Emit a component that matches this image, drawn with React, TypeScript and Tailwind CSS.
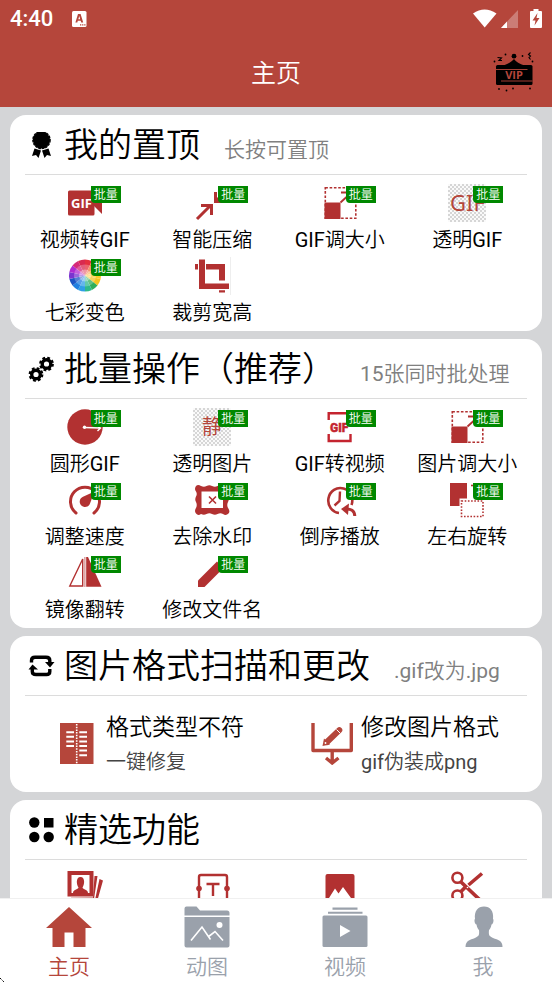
import React from 'react'

type Tool = { label: string; icon: React.ReactNode; batch?: boolean }

const RED = '#b23131'
const BRAND = '#b5463b'

/* ---------- Tool icons, all on a 38 x 38 grid ---------- */

const Icon = ({ children, className = '' }: { children: React.ReactNode; className?: string }) => (
  <svg viewBox="0 0 38 38" className={`size-[38px] ${className}`} fill={RED} aria-hidden="true">
    {children}
  </svg>
)

const checkered = 'bg-[repeating-conic-gradient(#d6d6d6_0_25%,#fafafa_0_50%)] bg-size-[4px_4px]'

const VideoToGif = () => (
  <Icon>
    <rect x="2" y="6.5" width="26.5" height="25" rx="1.5" />
    <path d="M27 20 36 11V30L28 22Z" />
    <text x="5" y="24" fill="#fff" fontFamily="Open Sans, sans-serif" fontSize="13" fontWeight="700">GIF</text>
  </Icon>
)

const Compress = () => (
  <Icon>
    <g fill="none" stroke={RED} strokeWidth="3">
      <path d="M4 35 17 22M8 21.500H18.500V31" />
      <path d="M22.500 8V17.500H32M23 17 34 6" />
    </g>
  </Icon>
)

const Resize = () => (
  <Icon>
    <rect x="4.300" y="3.800" width="30.500" height="30.500" fill="none" stroke={RED} strokeWidth="1.600" strokeDasharray="2.600 1.700" />
    <path d="M3.500 18.500H19.500V35H3.500Z" />
    <path d="M19.500 18.500 31 8M20 8.500H31V16" fill="none" stroke={RED} strokeWidth="1.800" />
  </Icon>
)

const TransparentGif = () => (
  <Icon className={checkered}>
    <text x="2" y="27" fill={BRAND} fontFamily="Noto Sans, sans-serif" fontSize="22" fontWeight="400">GIF</text>
  </Icon>
)

const TransparentStill = () => (
  <Icon className={checkered}>
    <text x="9" y="26" fill={BRAND} fontFamily="Noto Sans CJK SC, sans-serif" fontSize="20" fontWeight="400">静</text>
  </Icon>
)

const wheel = ['#e5303f', '#f0713a', '#f7a823', '#fbcb2c', '#f3c51f', '#2fae5a', '#2fb98a', '#2f9fe6', '#1f7fe0', '#1b55c4', '#7a34d0', '#b02bd0', '#d62a78', '#d92a50']

const ColorWheel = () => {
  const step = (Math.PI * 2) / wheel.length
  const at = (a: number) => `${19 + 16 * Math.sin(a)} ${18.5 - 16 * Math.cos(a)}`
  return (
    <Icon>
      {wheel.map((color, i) => (
        <path key={color} fill={color} d={`M19 18.500 L${at(i * step)} A16 16 0 0 1 ${at((i + 1) * step)}Z`} />
      ))}
      <circle cx="19" cy="18.500" r="11" fill="#fff" opacity=".25" />
      <circle cx="19" cy="18.500" r="6" fill="#fff" opacity=".35" />
    </Icon>
  )
}

const Crop = () => (
  <Icon>
    <path d="M2 7H5V12.500H2ZM6 2.500H12V26.500H36V32H6ZM13 7H32V23.500H26V12.500H13ZM26 33.200H32V35.500H26Z" />
    <path d="M38 0V38" stroke="#ddd" />
  </Icon>
)

const CircleGif = () => (
  <Icon>
    <circle cx="19" cy="19" r="17.700" />
    <circle cx="18.500" cy="19.300" r="1.700" fill="#fff" />
    <path d="M18.500 19.500 34 20M31 17.500 34.500 20 31.500 23" fill="none" stroke="#fff" strokeWidth="1.400" />
  </Icon>
)

const GifToVideo = () => (
  <Icon>
    <path d="M7.700 12V5.200H29.500V12M7.700 26V33H29.500V26" fill="none" stroke="#c4242f" strokeWidth="2.400" />
    <text x="9" y="23.500" fill="#c4242f" stroke="#c4242f" strokeWidth=".4" fontFamily="Roboto, sans-serif" fontSize="12" fontWeight="900">GIF</text>
  </Icon>
)

const Speed = () => (
  <Icon>
    <path d="M10 32A14.500 14.500 0 1 1 28 32" fill="none" stroke={RED} strokeWidth="3" strokeLinecap="round" />
    <path d="M28.500 10.500 24 22.500A5.300 5.300 0 1 1 17 15.800Z" />
  </Icon>
)

const Watermark = () => (
  <Icon>
    <path fillRule="evenodd" d="M3 5Q5 3 8 5 11 6.500 13.500 5 16.500 3.500 19 5 22 6.500 24.500 5 27.500 3.500 30 5 33 3 35.500 5 37 8 35 10.500 33.500 13 35 15.500 36.500 18.500 35 21 33.500 24 35 27 37.500 30 35.500 32.500 33 35 30 33 27.500 31.500 24.500 33 22 34.500 19 33 16.500 31.500 13.500 33 11 34.500 8 33 5 35 3 32.500 1 30 3 27 4.500 24 3 21 1.500 18.500 3 15.500 4.500 13 3 10.500 1 8 3 5ZM8.500 10.500V27H30V10.500Z" />
    <path d="M16 15.500 23 22.500M23 15.500 16 22.500" stroke={RED} strokeWidth="1.600" />
  </Icon>
)

const Reverse = () => (
  <Icon>
    <g fill="none" stroke={RED}>
      <path d="M18 32A12 12.500 0 1 1 30.500 24" strokeWidth="2.600" />
      <path d="M19 10.500 18.500 20 13.500 24.500" strokeWidth="2.400" />
      <path d="M24 28C30 27.500 33.500 29.500 33.800 35" strokeWidth="3" />
    </g>
    <path d="M20 28 28 22.500 27 34Z" />
  </Icon>
)

const Rotate = () => (
  <Icon>
    <path d="M2 2H19V17.500H11.500V25H2Z" />
    <rect x="13.500" y="20" width="21.500" height="15.500" fill="none" stroke={RED} strokeWidth="1.600" strokeDasharray="1.600 1.600" />
    <path d="M23 4.500H26" fill="none" stroke={RED} strokeWidth="1.600" />
  </Icon>
)

const Mirror = () => (
  <Icon>
    <path d="M3.800 32 16.700 5V32Z" fill="none" stroke={RED} strokeWidth="1.400" />
    <path d="M18.900 3V33" stroke={RED} strokeWidth=".7" />
    <path d="M20.200 3H22L35.500 32.700H20.200Z" />
  </Icon>
)

const Rename = () => (
  <Icon>
    <path d="M5 33V26.500L24 7.500 30.500 14 11.500 33Z" />
  </Icon>
)

const Photos = () => (
  <Icon>
    <path fillRule="evenodd" d="M1.500 2H27.500V27.500H1.500ZM5.500 6V24H23.500V6Z" />
    <path d="M7 24C7 20.500 12 20.500 12.500 18.500 10.500 16 9.500 8 14.500 8S18.500 16 16.500 18.500C17 20.500 22 20.500 22 24Z" />
    <path d="M28.500 7H31.500L28 30 5 29.500V28.800L27 28.500ZM33.500 10 37 11.500 31.500 31H29Z" />
  </Icon>
)

const TextBox = () => (
  <Icon>
    <path d="M6 36V8Q6 6 8 6H32Q34 6 34 8V36M13.500 15H26.500M20 15V27" fill="none" stroke={RED} strokeWidth="2.400" />
    <circle cx="6" cy="19.500" r="2.800" />
    <circle cx="34" cy="19.500" r="2.800" />
  </Icon>
)

const Picture = () => (
  <Icon>
    <rect x="4.500" y="5" width="29" height="29" rx="2" />
    <path d="M8 29 14 19.500 17.500 24.500 22 18 30 29Z" fill="#fff" />
  </Icon>
)

const Scissors = () => (
  <Icon>
    <g fill="none" stroke={RED}>
      <circle cx="9.400" cy="8.800" r="5" strokeWidth="2.600" />
      <circle cx="9.400" cy="26.500" r="5" strokeWidth="2.600" />
      <path d="M12.500 12.500 32 31M34 4.500 20.500 16M17 18.500 12.500 23" strokeWidth="3.600" />
    </g>
    <circle cx="19.500" cy="18.500" r=".8" fill="#fff" />
  </Icon>
)

/* ---------- Section heading icons ---------- */

const HeadIcon = ({ children }: { children: React.ReactNode }) => (
  <svg viewBox="0 0 28 28" className="size-7 shrink-0" aria-hidden="true">{children}</svg>
)

const Medal = () => (
  <HeadIcon>
    <circle cx="14.500" cy="8" r="8.600" />
    <circle cx="14.500" cy="8" r="8.600" fill="none" stroke="#000" strokeWidth="1.400" strokeDasharray="2.600 .9" />
    <path d="M7.500 16.500 14 18.500 11.500 26 9 23 5 24ZM21.500 16.500 15 18.500 17.500 26 20 23 24 24Z" />
  </HeadIcon>
)

const Gear = ({ x, y }: { x: number; y: number }) => (
  <g fill="none" stroke="#000">
    <circle cx={x} cy={y} r="4.300" strokeWidth="3.400" />
    <circle cx={x} cy={y} r="6.200" strokeWidth="2.400" strokeDasharray="2.700 2.170" />
  </g>
)

const Gears = () => (
  <HeadIcon>
    <Gear x={9} y={18.500} />
    <Gear x={19.500} y={8} />
  </HeadIcon>
)

const Swap = () => (
  <HeadIcon>
    <g fill="none" stroke="#000" strokeWidth="3.400">
      <path d="M4.500 9.500V7.500Q4.500 4.200 8 4.200H19Q22.800 4.200 22.800 7.500V10" />
      <path d="M22.800 16V18.500Q22.800 21.500 19.500 21.500H9Q5.300 21.500 5.300 18.500V16" />
    </g>
    <path d="M18 9H27.500L23 14.500ZM1.500 16.500H11L5.500 11.500Z" />
  </HeadIcon>
)

const Dots = () => (
  <HeadIcon>
    <circle cx="7.300" cy="5.500" r="5.200" />
    <rect x="17" y="1" width="9.500" height="9.500" />
    <circle cx="7.300" cy="20" r="5.200" />
    <circle cx="21.700" cy="20" r="5.200" />
  </HeadIcon>
)

/* ---------- Format icons ---------- */

const Book = () => (
  <svg viewBox="0 0 42 42" className="size-[42px] shrink-0" aria-hidden="true">
    <rect x="4" y="0" width="33.500" height="41" fill={BRAND} />
    <path d="M20.700 1V41" stroke="#fff" strokeWidth="1.600" strokeDasharray="1.500 1.200" />
    <path d="M10.300 9.300H18M10.300 13.800H18M10.300 18.400H18M10.300 23H18M23.300 9.300H31M23.300 13.800H31M23.300 18.400H31M23.300 23H31M23.300 27.600H31M23.300 32.200H31" stroke="#fff" strokeWidth="2" />
  </svg>
)

const EditFormat = () => (
  <svg viewBox="0 0 42 42" className="size-[42px] shrink-0" fill="none" stroke={BRAND} aria-hidden="true">
    <path d="M2 0V27.500H40.300V0" strokeWidth="3.400" strokeLinejoin="round" />
    <path d="M21.200 28V39M15 35 21.200 40 27.500 35" strokeWidth="3.400" />
    <path d="M16 19 28.300 7.200" strokeWidth="6" strokeLinecap="round" />
    <path d="M11.500 23 13 15.500 19 21.500Z" fill={BRAND} stroke="none" />
    <path d="M25.500 6.500 29 10" stroke="#fff" strokeWidth="1" />
    <circle cx="14.500" cy="20" r=".9" fill="#fff" stroke="none" />
  </svg>
)

/* ---------- Bottom bar icons ---------- */

const TabIcon = ({ children }: { children: React.ReactNode }) => (
  <svg viewBox="0 0 46 42" className="h-[42px] w-[46px]" fill="currentColor" aria-hidden="true">{children}</svg>
)

const HomeTab = () => (
  <TabIcon>
    <path d="M23 1 46 22H39.500V41H27.500V26.500H18.500V41H6.500V22H0Z" />
  </TabIcon>
)

const FolderTab = () => (
  <TabIcon>
    <path d="M.5 2.500Q.5.500 2.500.500H12.500L16 4.500H43Q45.500 4.500 45.500 7V9.500H.5ZM.5 11H45.500V39.500Q45.500 41.500 43.500 41.500H2.500Q.5 41.500.500 39.500Z" />
    <circle cx="35.500" cy="19" r="3" fill="#fff" />
    <path d="M7 34.500 18 21 26.500 33.500M24 31 31 25.500 39 34.500" fill="none" stroke="#fff" strokeWidth="1.600" />
  </TabIcon>
)

const VideoTab = () => (
  <TabIcon>
    <path d="M10.500 1.500H35.500V3.700H10.500ZM6 5.800H40.500V7.800H6Z" />
    <rect x=".5" y="9.500" width="45" height="31.500" rx="1.500" />
    <path d="M18 19V31L28.500 25Z" fill="#fff" />
  </TabIcon>
)

const UserTab = () => (
  <TabIcon>
    <path d="M24 .5C30 .5 34 5 33 13 34 13.500 33.500 18 31.500 18.500 31 21.500 30 23 29 24 28.500 29 29 30 33 32 38 34 42.500 34.500 42.500 41H5.500C5.500 34.500 10 34 15 32 19 30 19.500 29 19 24 18 23 17 21.500 16.500 18.500 14.500 18 14 13.500 15 13 14 5 18 .5 24 .5Z" />
  </TabIcon>
)

/* ---------- Data ---------- */

const pinned: Tool[] = [
  { label: '视频转GIF', icon: <VideoToGif />, batch: true },
  { label: '智能压缩', icon: <Compress />, batch: true },
  { label: 'GIF调大小', icon: <Resize />, batch: true },
  { label: '透明GIF', icon: <TransparentGif />, batch: true },
  { label: '七彩变色', icon: <ColorWheel />, batch: true },
  { label: '裁剪宽高', icon: <Crop /> },
]

const batchTools: Tool[] = [
  { label: '圆形GIF', icon: <CircleGif />, batch: true },
  { label: '透明图片', icon: <TransparentStill />, batch: true },
  { label: 'GIF转视频', icon: <GifToVideo />, batch: true },
  { label: '图片调大小', icon: <Resize />, batch: true },
  { label: '调整速度', icon: <Speed />, batch: true },
  { label: '去除水印', icon: <Watermark />, batch: true },
  { label: '倒序播放', icon: <Reverse />, batch: true },
  { label: '左右旋转', icon: <Rotate />, batch: true },
  { label: '镜像翻转', icon: <Mirror />, batch: true },
  { label: '修改文件名', icon: <Rename />, batch: true },
]

const featured: Tool[] = [
  { label: '', icon: <Photos /> },
  { label: '', icon: <TextBox /> },
  { label: '', icon: <Picture /> },
  { label: '', icon: <Scissors /> },
]

const formats = [
  { title: '格式类型不符', note: '一键修复', icon: <Book /> },
  { title: '修改图片格式', note: 'gif伪装成png', icon: <EditFormat /> },
]

const tabs = [
  { label: '主页', icon: <HomeTab />, active: true },
  { label: '动图', icon: <FolderTab /> },
  { label: '视频', icon: <VideoTab /> },
  { label: '我', icon: <UserTab /> },
]

/* ---------- Layout pieces ---------- */

// Latin runs stay at regular weight, the Chinese around them is demi-light
const Mixed = ({ text }: { text: string }) => (
  <>
    {text.split(/([\w.]+)/).map((part, i) =>
      i % 2 ? <span key={i} className="font-normal">{part}</span> : part
    )}
  </>
)

const Section = ({ icon, title, hint, children }: { icon: React.ReactNode; title: string; hint?: string; children: React.ReactNode }) => (
  <section className="shrink-0 rounded-2xl bg-white">
    <div className="mx-[15px] flex h-[60px] items-center gap-[9px] border-b border-[#dcdcdc] pt-[2px] pl-[2px]">
      {icon}
      <div className="flex items-baseline gap-6 whitespace-nowrap">
        <h2 className="text-[34px] leading-[57px]">{title}</h2>
        {hint && <p className="text-[21px] text-[#808080]"><Mixed text={hint} /></p>}
      </div>
    </div>
    {children}
  </section>
)

const ToolGrid = ({ tools }: { tools: Tool[] }) => (
  <div className="grid grid-cols-4 px-[11px] pt-[9px] pb-px">
    {tools.map((tool, i) => (
      <button key={i} type="button" className="flex h-[73px] flex-col items-center">
        <span className="relative">
          {tool.icon}
          {tool.batch && (
            <span className="absolute top-[2px] left-[25px] h-[17px] w-[30px] rounded-bl bg-[#008800] text-center text-xs leading-[18px] text-white">
              批量
            </span>
          )}
        </span>
        <span className="text-xl leading-9 whitespace-nowrap"><Mixed text={tool.label} /></span>
      </button>
    ))}
  </div>
)

const StatusBar = () => (
  <div className="flex h-[37px] items-center justify-between px-[10px]">
    <div className="flex items-center gap-[19px]">
      <span className="text-[22px] font-medium">4:40</span>
      <svg viewBox="0 0 15 16" className="h-4 w-[15px]" aria-hidden="true">
        <rect width="14.500" height="16" rx="1.500" fill="#fff" />
        <path d="M6 3H8.600L11.200 11.500H9.200L8.700 9.800H5.800L5.300 11.500H3.400ZM6.300 8.200H8.200L7.300 5Z" fill={BRAND} fillRule="evenodd" />
        <path d="M8 13.800H13.500" stroke={BRAND} strokeWidth="1.200" strokeDasharray="1.300 .8" />
      </svg>
    </div>
    <svg viewBox="0 0 70 20" className="h-5 w-[70px]" fill="#fff" aria-hidden="true">
      <path d="M1 4.500Q12.500-3.500 24.500 4.500L12.700 18.500Z" />
      <path d="M46 1V19H29Z" opacity=".3" />
      <path d="M35 12.500V19H29Z" />
      <path fillRule="evenodd" d="M61.500 0H66.500V2H69Q70 2 70 3V18Q70 19 69 19H59Q58 19 58 18V3Q58 2 59 2H61.500ZM65.500 4 60.500 11.500H63.500L62.500 16.500 67.500 9H64.500Z" />
    </svg>
  </div>
)

const VipSign = () => (
  <svg viewBox="0 0 42 42" className="size-[42px]" aria-hidden="true">
    <circle cx="21" cy="5.200" r="2.400" />
    <path d="M10.500 14.500Q18 12 21 8 24 12 31.500 14.500Z" />
    <rect x="3" y="14" width="36.500" height="20" rx="1.500" />
    <path d="M3 18.500H34.500M8 30H39.500" stroke={BRAND} strokeWidth=".9" />
    <text x="21" y="28" textAnchor="middle" fill={BRAND} fontFamily="Open Sans, sans-serif" fontSize="11" fontWeight="700">VIP</text>
    <path d="M4.500 6.500 8.500 7 6 9.500 9 9.500M37.500 1.500 35.500 3.500 37.500 5 36 6.500 37.500 8.500" fill="none" stroke="#000" strokeWidth="1.100" />
    <g>
      <circle cx="1.500" cy="10.500" r=".9" />
      <circle cx="12.500" cy="3.500" r=".9" />
      <circle cx="29.500" cy="5" r=".9" />
      <circle cx="39.500" cy="10.500" r=".9" />
      <circle cx="6" cy="38" r=".9" />
      <circle cx="13.500" cy="39.500" r=".9" />
      <circle cx="20" cy="37.500" r=".9" />
      <circle cx="37" cy="37.500" r=".9" />
    </g>
  </svg>
)

const App = () => {
  return (
    <div className="relative flex h-screen flex-col overflow-hidden bg-[#d4d5d7] font-[Roboto,'Noto_Sans_CJK_SC',sans-serif] font-[350] text-black">
      {/* Header */}
      <header className="shrink-0 bg-[#b5463b] text-white">
        <StatusBar />
        <div className="grid h-[70px] grid-cols-[1fr_auto_1fr] items-center px-[17px]">
          <h1 className="col-start-2 pt-[3px] text-[25px]">主页</h1>
          <button type="button" aria-label="VIP" className="justify-self-end">
            <VipSign />
          </button>
        </div>
      </header>

      {/* Sections */}
      <main className="flex min-h-0 flex-1 flex-col gap-2 overflow-y-auto px-[10px] pt-2 [scrollbar-width:none]">
        <Section icon={<Medal />} title="我的置顶" hint="长按可置顶">
          <ToolGrid tools={pinned} />
        </Section>

        <Section icon={<Gears />} title="批量操作（推荐）" hint="15张同时批处理">
          <ToolGrid tools={batchTools} />
        </Section>

        <Section icon={<Swap />} title="图片格式扫描和更改" hint=".gif改为.jpg">
          <div className="grid grid-cols-2 px-[11px] py-[13px]">
            {formats.map((item) => (
              <button key={item.title} type="button" className="flex items-center gap-2 pl-[35px] text-left whitespace-nowrap">
                {item.icon}
                <span className="flex flex-col pt-[2px]">
                  <span className="text-[23px] leading-[34px]">{item.title}</span>
                  <span className="text-xl leading-[34px] text-[#444]"><Mixed text={item.note} /></span>
                </span>
              </button>
            ))}
          </div>
        </Section>

        <Section icon={<Dots />} title="精选功能">
          <ToolGrid tools={featured} />
        </Section>
      </main>

      {/* Bottom bar */}
      <nav className="grid shrink-0 grid-cols-4 border-t border-[#f0f0f0] bg-white pt-[7px]">
        {tabs.map((tab) => (
          <a key={tab.label} href="#" className={`flex flex-col items-center ${tab.active ? 'text-[#b5463b]' : 'text-[#9aa1ab]'}`}>
            {tab.icon}
            <span className="pt-[3px] text-[21px] leading-8">{tab.label}</span>
          </a>
        ))}
      </nav>

      {/* Corner mark */}
      <svg viewBox="0 0 5 5" className="absolute bottom-0 left-0 size-[5px]" aria-hidden="true">
        <path d="M0 0 4 4" stroke="#000" strokeDasharray="1.400 .8" />
      </svg>
    </div>
  )
}

export default App
